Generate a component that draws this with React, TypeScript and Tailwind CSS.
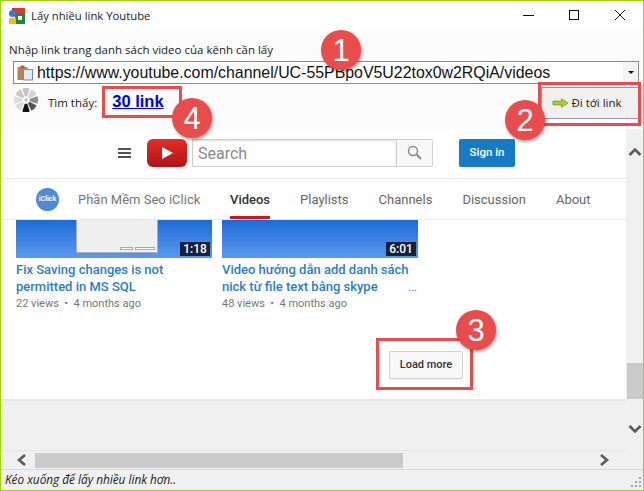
import React from "react";

const sans = "font-['Open_Sans','Noto_Sans',sans-serif]";

const spinnerColors = ["#c4c4c4", "#d4d4d4", "#8e8e8e", "#555555", "#111111", "#dcdcdc", "#dcdcdc", "#c8c8c8"];

function wedge(i: number) {
  const mid = (i * 45 - 90) * (Math.PI / 180);
  const half = 18 * (Math.PI / 180);
  const pt = (r: number, a: number) => `${(12 + r * Math.cos(a)).toFixed(2)} ${(12 + r * Math.sin(a)).toFixed(2)}`;
  return `M${pt(4, mid - half)}L${pt(12, mid - half)}A12 12 0 0 1 ${pt(12, mid + half)}L${pt(4, mid + half)}Z`;
}

function Badge({ n, className }: { n: string; className: string }) {
  return (
    <div className={`absolute flex h-10 w-10 items-center justify-center rounded-full bg-[#e94c4c] font-['Liberation_Sans',sans-serif] text-[31px] leading-none text-white shadow-[1px_2px_3px_rgba(0,0,0,0.35)] ${className}`}>
      {n}
    </div>
  );
}

function Chevron({ d }: { d: string }) {
  return (
    <svg width="14" height="14" viewBox="0 0 14 14" className="shrink-0">
      <path d={d} fill="none" stroke="#5a5a5a" strokeWidth="2.6" />
    </svg>
  );
}

function Tab({ label, active }: { label: string; active?: boolean }) {
  return (
    <div className={`relative flex h-full items-center pt-[1px] text-[13px] ${active ? "font-medium text-[#333]" : "text-[#666]"}`}>
      {label}
      {active && <div className="absolute bottom-0 left-0 h-[3px] w-full bg-[#cc181e]" />}
    </div>
  );
}

function Video({ time, t1, t2, views, win, more }: { time: string; t1: string; t2: string; views: string; win?: boolean; more?: boolean }) {
  return (
    <div className="w-[196px]">
      <div className="relative h-[38px] overflow-hidden bg-gradient-to-b from-[#1b6ad6] to-[#5a9aee]">
        {win && (
          <div className="absolute left-[60px] top-[-4px] h-[37px] w-[82px] border border-[#a9b0b8] bg-[#efefef]">
            <div className="absolute bottom-[2px] right-[2px] flex gap-[2px]">
              <div className="h-[3px] w-[13px] border border-[#8fb4c8] bg-white" />
              <div className="h-[3px] w-[20px] border border-[#aaa] bg-white" />
            </div>
          </div>
        )}
        <div className="absolute bottom-[2px] right-[2px] flex h-[14px] w-[30px] items-center justify-center bg-[#14213a] text-[12px] font-medium text-white">
          {time}
        </div>
      </div>
      <div className="relative mt-[3px] text-[13px] font-medium leading-[17px] text-[#2b7cc8]">
        <div className="h-[17px] whitespace-nowrap">{t1}</div>
        <div className="h-[17px] whitespace-nowrap">{t2}</div>
        {more && <div className="absolute bottom-[-1px] right-[1px] text-[11px] font-normal">...</div>}
      </div>
      <div className="mt-[1px] whitespace-pre text-[11px] leading-[16px] text-[#767676]">{views}</div>
    </div>
  );
}

export default function App() {
  return (
    <div className={`relative flex h-[491px] w-[644px] flex-col overflow-hidden border border-[#9fd30f] bg-[#f0f0f0] ${sans}`}>
      {/* title bar */}
      <div className="flex h-[30px] shrink-0 items-center bg-white pl-[8px]">
        <svg width="16" height="16" viewBox="0 0 16 16">
          <rect x="3" y="0" width="13" height="6" fill="#d8392b" />
          <rect x="6" y="6" width="10" height="10" fill="#1f8a3a" />
          <circle cx="3.5" cy="5.5" r="3.5" fill="#3f73d8" />
          <rect x="0" y="10" width="7" height="6" fill="#f2bb1c" />
          <rect x="9" y="8" width="4" height="4" fill="#fff" />
        </svg>
        <div className="ml-[6px] text-[11.3px] text-[#222]">Lấy nhiều link Youtube</div>
        <div className="ml-auto flex items-center">
          <svg width="120" height="30" viewBox="0 0 120 30">
            <path d="M0 14.5H11" stroke="#111" strokeWidth="1" />
            <rect x="46.5" y="9.5" width="9" height="9" fill="none" stroke="#111" strokeWidth="1" />
            <path d="M92 9L102 19M102 9L92 19" stroke="#111" strokeWidth="1" />
          </svg>
        </div>
      </div>

      {/* form panel */}
      <div className="flex h-[98px] shrink-0 flex-col bg-[#fbfbfb] px-[8px]">
        <div className="mt-[11px] text-[11.5px] leading-[16px] text-[#222]">Nhập link trang danh sách video của kênh cần lấy</div>
        <div className="ml-[4px] mr-[-4px] mt-[3px] flex h-[23px] items-center border border-[#8a8a8a] bg-white pl-[3px]">
          <svg width="17" height="16" viewBox="0 0 17 16" className="shrink-0">
            <rect x="0.5" y="2" width="10" height="13" fill="#b5835a" />
            <rect x="3.5" y="0.5" width="4" height="3" fill="#8f6a48" />
            <rect x="6.5" y="4.5" width="9" height="10.5" fill="#dfeaf7" stroke="#6a8fb8" />
          </svg>
          <div className="ml-[3px] pt-[1px] font-['Liberation_Sans',sans-serif] text-[15.9px] leading-none text-[#111]">https://www.youtube.com/channel/UC-55PBpoV5U22tox0w2RQiA/videos</div>
          <div className="ml-auto flex h-full w-[15px] items-center justify-center bg-[#f3f3f3]">
            <div className="h-0 w-0 border-x-[3.5px] border-t-[3.5px] border-x-transparent border-t-black" />
          </div>
        </div>
        <div className="mt-[1px] flex items-start">
          <svg width="24" height="24" viewBox="0 0 24 24" className="ml-[5px] mt-[3px] shrink-0">
            {spinnerColors.map((c, i) => (
              <path key={i} d={wedge(i)} fill={c} />
            ))}
            <circle cx="12" cy="12" r="1.6" fill="#bdbdbd" />
          </svg>
          <div className="ml-[10px] mt-[10px] text-[11.5px] leading-[16px] text-[#222]">Tìm thấy:</div>
          <div className="ml-[15px] mt-[5px] font-['Liberation_Sans',sans-serif] text-[16.5px] font-bold leading-[22px] text-[#0000e6] underline">30 link</div>
          <div className="ml-auto mr-[-4px] mt-[2px] flex h-[32px] w-[98px] items-center justify-center gap-[2px] border border-[#9a9a9a] bg-[#f0f0f0] pr-[6px] text-[11.5px] text-[#222]">
            <svg width="17" height="10" viewBox="0 0 18 10">
              <path d="M1 3H10V0.5L17 5L10 9.5V7H1Z" fill="#a5cf2e" stroke="#6f9a16" strokeWidth="0.8" />
            </svg>
            Đi tới link
          </div>
        </div>
      </div>

      {/* browser + vertical scrollbar */}
      <div className="flex min-h-0 flex-1">
        <div className="flex min-w-0 flex-1 flex-col">
          <div className="flex h-[272px] shrink-0 flex-col border-b-2 border-[#e8e8e8] bg-white font-['Roboto',sans-serif]">
            {/* masthead */}
            <div className="flex h-[50px] shrink-0 items-center border-b border-[#e8e8e8] pb-[2px]">
              <div className="ml-[117px] flex w-[13px] flex-col gap-[2px]">
                <div className="h-[2px] bg-[#555]" />
                <div className="h-[2px] bg-[#555]" />
                <div className="h-[2px] bg-[#555]" />
              </div>
              <div className="ml-[16px] flex h-[28px] w-[40px] items-center justify-center rounded-[6px] bg-gradient-to-b from-[#e52d27] to-[#b31217]">
                <div className="h-0 w-0 border-y-[6px] border-l-[11px] border-y-transparent border-l-white" />
              </div>
              <div className="ml-[5px] flex h-[28px] w-[241px]">
                <div className="flex flex-1 items-center border border-[#cfcfcf] pl-[5px] pt-[3px] text-[16px] text-[#8a8a8a] shadow-[inset_0_1px_2px_#ddd]">Search</div>
                <div className="flex w-[36px] items-center justify-center rounded-r-[2px] border border-l-0 border-[#d3d3d3] bg-[#f8f8f8]">
                  <svg width="15" height="15" viewBox="0 0 15 15">
                    <circle cx="6" cy="6" r="4.5" fill="none" stroke="#888" strokeWidth="1.4" />
                    <path d="M9.5 9.5L14 14" stroke="#888" strokeWidth="2" />
                  </svg>
                </div>
              </div>
              <div className="ml-[26px] flex h-[28px] w-[56px] items-center justify-center rounded-[2px] bg-[#167ac6] pt-[1px] text-[11.5px] font-medium text-white">Sign in</div>
            </div>
            {/* tabs */}
            <div className="flex h-[41px] shrink-0 items-center border-b border-[#e8e8e8]">
              <div className="ml-[35px] flex h-[23px] w-[23px] items-center justify-center rounded-full bg-[#4f8ad8] text-[7px] font-bold text-white">iClick</div>
              <div className="ml-[19px] w-[152px] pt-[1px] text-[13px] text-[#767676]">Phần Mềm Seo iClick</div>
              <div className="flex h-full gap-[30px]">
                <Tab label="Videos" active />
                <Tab label="Playlists" />
                <Tab label="Channels" />
                <Tab label="Discussion" />
                <Tab label="About" />
              </div>
            </div>
            {/* grid */}
            <div className="flex gap-[10px] pl-[15px]">
              <Video win time="1:18" t1="Fix Saving changes is not" t2="permitted in MS SQL" views="22 views  •  4 months ago" />
              <Video more time="6:01" t1="Video hướng dẫn add danh sách" t2="nick từ file text bằng skype" views="48 views  •  4 months ago" />
            </div>
            <div className="mt-[39px] flex">
              <div className="ml-[388px] flex h-[28px] w-[74px] items-center justify-center rounded-[2px] border border-[#d3d3d3] bg-[#f8f8f8] text-[11px] font-medium text-[#333] shadow-[0_1px_0_rgba(0,0,0,0.05)]">Load more</div>
            </div>
          </div>
          <div className="flex-1" />
          {/* horizontal scrollbar */}
          <div className="flex h-[19px] shrink-0 items-center border-t border-[#e4e4e4] pl-[14px] pr-[15px]">
            <Chevron d="M10 2L4 7L10 12" />
            <div className="ml-[6px] h-[15px] w-[368px] bg-[#cacaca]" />
            <div className="ml-auto"><Chevron d="M4 2L10 7L4 12" /></div>
          </div>
        </div>
        <div className="flex w-[17px] shrink-0 flex-col items-center bg-[#f0f0f0]">
          <div className="mt-[16px]"><Chevron d="M1.5 10L7 4.5L12.5 10" /></div>
          <div className="mt-[204px] h-[36px] w-[16px] bg-[#cacaca]" />
          <div className="mt-[23px]"><Chevron d="M1.5 4L7 9.5L12.5 4" /></div>
        </div>
      </div>

      {/* status bar */}
      <div className="flex h-[21px] shrink-0 items-center border-t border-[#d8d8d8] pl-[4px] text-[11.8px] italic text-[#222]">
        Kéo xuống để lấy nhiều link hơn..
        <svg width="12" height="12" viewBox="0 0 12 12" className="ml-auto mr-[1px] mt-[4px]">
          <g fill="#a0a0a0">
            <rect x="9" y="1" width="2" height="2" /><rect x="5" y="5" width="2" height="2" /><rect x="9" y="5" width="2" height="2" />
            <rect x="1" y="9" width="2" height="2" /><rect x="5" y="9" width="2" height="2" /><rect x="9" y="9" width="2" height="2" />
          </g>
        </svg>
      </div>

      {/* annotations */}
      <div className="pointer-events-none absolute left-[101px] top-[85px] h-[32px] w-[80px] border-[3px] border-[#e94c4c]" />
      <div className="pointer-events-none absolute left-[537px] top-[81px] h-[44px] w-[103px] border-[3px] border-[#e94c4c]" />
      <div className="pointer-events-none absolute left-[375px] top-[337px] h-[52px] w-[97px] border-[3px] border-[#e94c4c]" />
      <Badge n="1" className="left-[320px] top-[29px]" />
      <Badge n="2" className="left-[504px] top-[99px]" />
      <Badge n="3" className="left-[455px] top-[309px]" />
      <Badge n="4" className="left-[171px] top-[97px]" />
    </div>
  );
}
